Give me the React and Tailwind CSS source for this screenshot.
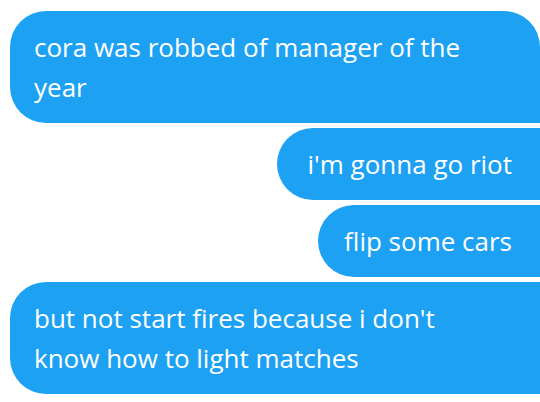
export default function App() {
  const font = { fontFamily: '"Open Sans", "Noto Sans", sans-serif' }
  return (
    <div className="w-[540px] h-[402px] bg-white overflow-hidden pt-[11px] pl-[10px] flex flex-col items-end gap-[5px]" style={font}>
      <div className="w-[530px] bg-[#1da1f2] text-white text-[26px] leading-[40px] pl-[24px] pr-[76px] py-[16px] rounded-l-[36px] rounded-tr-[36px]">
        cora was robbed of manager of the year
      </div>
      <div className="bg-[#1da1f2] text-white text-[26px] leading-[40px] pl-[30px] pr-[28px] py-[16px] rounded-l-[36px]">
        i'm gonna go riot
      </div>
      <div className="bg-[#1da1f2] text-white text-[26px] leading-[40px] pl-[26px] pr-[28px] py-[16px] rounded-l-[36px]">
        flip some cars
      </div>
      <div className="w-[530px] bg-[#1da1f2] text-white text-[26px] leading-[40px] pl-[24px] pr-[76px] py-[16px] rounded-l-[36px]">
        but not start fires because i don't know how to light matches
      </div>
    </div>
  )
}
